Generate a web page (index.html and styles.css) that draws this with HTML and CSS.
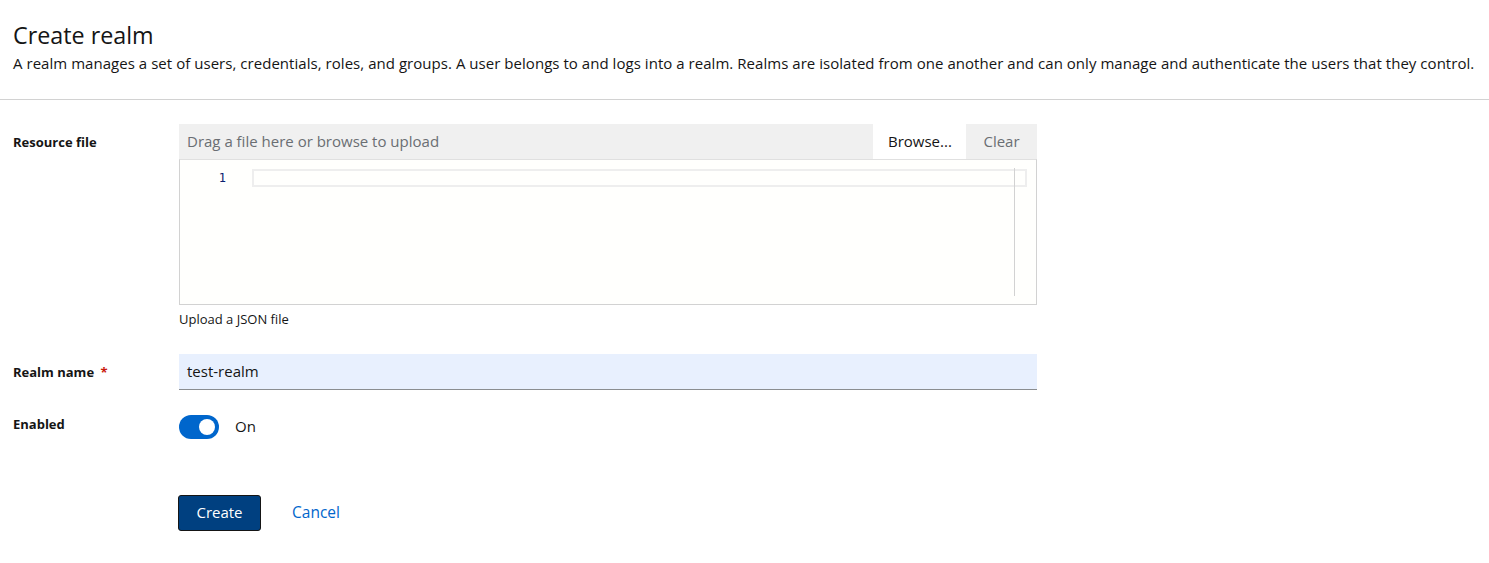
FILE: index.html
```html
<!DOCTYPE html>
<html>
<head>
<meta charset="utf-8">
<link rel="stylesheet" href="styles.css">
</head>
<body>
<header class="page-header">
  <h1 class="title">Create realm</h1>
  <p class="desc">A realm manages a set of users, credentials, roles, and groups. A user belongs to and logs into a realm. Realms are isolated from one another and can only manage and authenticate the users that they control.</p>
</header>
<main class="form">
  <div class="row row-file">
    <div class="label">Resource file</div>
    <div class="control">
      <div class="upload">
        <div class="upload-bar">
          <span class="upload-text">Drag a file here or browse to upload</span>
          <button class="btn-browse">Browse...</button>
          <button class="btn-clear">Clear</button>
        </div>
        <div class="editor">
          <div class="gutter">1</div>
          <div class="code">
            <div class="current-line"></div>
          </div>
          <div class="ruler"></div>
        </div>
      </div>
      <div class="helper">Upload a JSON file</div>
    </div>
  </div>
  <div class="row row-name">
    <div class="label">Realm name <span class="req">*</span></div>
    <div class="control">
      <div class="input">test-realm</div>
    </div>
  </div>
  <div class="row row-enabled">
    <div class="label">Enabled</div>
    <div class="control switch-wrap">
      <span class="switch"><span class="knob"></span></span>
      <span class="switch-label">On</span>
    </div>
  </div>
  <div class="row row-actions">
    <div class="label"></div>
    <div class="control actions">
      <button class="btn-primary">Create</button>
      <button class="btn-link">Cancel</button>
    </div>
  </div>
</main>
</body>
</html>
```
FILE: styles.css
```css
* { box-sizing: border-box; }
body {
  margin: 0;
  font-family: "Open Sans", "Noto Sans", sans-serif;
  color: #151515;
  background: #fff;
}
.page-header {
  padding: 20px 13px 25px;
  border-bottom: 1px solid #d2d2d2;
}
.title {
  margin: 0;
  font-size: 23.3px;
  font-weight: 400;
  line-height: 31px;
}
.desc {
  margin: 1px 0 0;
  font-size: 15px;
  letter-spacing: 0.04px;
  line-height: 22px;
}
.form {
  padding: 24px 13px;
  display: flex;
  flex-direction: column;
}
.row {
  display: flex;
}
.label {
  width: 166px;
  flex: none;
  font-size: 13px;
  font-weight: 700;
  padding-top: 9px;
}
.req { color: #c9190b; margin-left: 3px; }
.control {
  width: 858px;
}
.upload-bar {
  display: flex;
  height: 35px;
  background: #f0f0f0;
}
.upload-text {
  flex: 1;
  padding: 0 8px;
  line-height: 35px;
  font-size: 15px;
  color: #6a6e73;
}
.btn-browse, .btn-clear {
  border: 0;
  font: inherit;
  font-size: 15px;
  padding: 0 15px 2px;
  height: 35px;
}
.btn-browse { background: #fff; color: #151515; width: 93px; }
.btn-clear { background: transparent; color: #6a6e73; width: 71px; }
.editor {
  height: 146px;
  border: 1px solid #d2d2d2;
  border-top-color: #e0e0e0;
  background: #fffffd;
  display: flex;
  position: relative;
}
.gutter {
  width: 73px;
  font-family: "DejaVu Sans Mono", monospace;
  font-size: 12px;
  color: #0b216f;
  text-align: right;
  padding: 9px 27px 0 0;
  line-height: 18px;
}
.code {
  flex: 1;
  padding: 9px 9px 0 0;
}
.current-line {
  height: 18px;
  margin-left: -1px;
  border: 2px solid #eeeeee;
}
.ruler {
  position: absolute;
  left: 834px;
  top: 8px;
  bottom: 8px;
  width: 1px;
  background: #d2d2d2;
}
.helper {
  font-size: 13px;
  margin-top: 4px;
  line-height: 20px;
}
.row-name { margin-top: 25px; }
.input {
  height: 36px;
  background: #e8f0fe;
  border-bottom: 1px solid #8a8d90;
  padding: 0 8px;
  font-size: 15px;
  line-height: 34px;
}
.row-enabled { margin-top: 25px; }
.row-enabled .label { padding-top: 0; }
.switch-wrap { display: flex; align-items: center; height: 24px; }
.switch {
  width: 40px;
  height: 24px;
  border-radius: 12px;
  background: #0066cc;
  position: relative;
  flex: none;
}
.knob {
  position: absolute;
  right: 4px;
  top: 4px;
  width: 16px;
  height: 16px;
  border-radius: 50%;
  background: #fff;
}
.switch-label { margin-left: 16px; font-size: 15px; line-height: 22px; padding-bottom: 2px; }
.row-actions { margin-top: 56px; }
.actions { display: flex; align-items: center; }
.btn-primary {
  margin-left: -1px;
  height: 36px;
  width: 83px;
  background: #004080;
  color: #fff;
  border: 1px solid #151515;
  border-radius: 3px;
  font: inherit;
  font-size: 15px;
  padding: 0 0 2px;
}
.btn-link {
  background: none;
  border: 0;
  font: inherit;
  font-size: 15.5px;
  color: #0066cc;
  margin-left: 15px;
  padding: 0 16px 2px;
}
```
